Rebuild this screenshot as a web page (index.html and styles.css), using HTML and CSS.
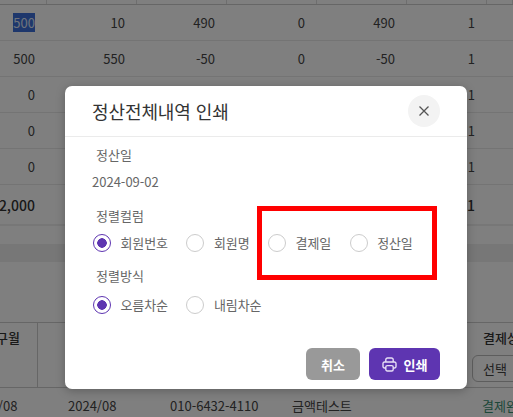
FILE: index.html
```html
<!DOCTYPE html>
<html lang="ko">
<head>
    <meta charset="utf-8">
    <title>정산내역</title>
    <link rel="stylesheet" href="styles.css">
</head>
<body>

<div class="page">
    <div class="row head-edge"><span></span><span></span><span></span><span></span><span></span><span></span><span></span></div>
    <div class="row"><span><b class="picked">500</b></span><span>10</span><span>490</span><span>0</span><span>490</span><span>1</span><span></span></div>
    <div class="row"><span>500</span><span>550</span><span>-50</span><span>0</span><span>-50</span><span>1</span><span></span></div>
    <div class="row"><span>0</span><span>0</span><span>0</span><span>0</span><span>0</span><span>1</span><span></span></div>
    <div class="row"><span>0</span><span>0</span><span>0</span><span>0</span><span>0</span><span>1</span><span></span></div>
    <div class="row"><span>0</span><span>0</span><span>0</span><span>0</span><span>0</span><span>1</span><span></span></div>
    <div class="row total"><span>2,000</span><span></span><span></span><span></span><span></span><span>11</span><span></span></div>
    <div class="band"></div>

    <div class="list-head">
        <div class="list-cell name">구월</div>
        <div class="list-cell rest"></div>
        <div class="list-cell status">
            <span>결제상태</span>
            <div class="select">선택</div>
        </div>
    </div>
    <div class="list-row">
        <span class="c1">2024/08</span>
        <span class="c2">2024/08</span>
        <span class="c3">010-6432-4110</span>
        <span class="c4">금액테스트</span>
        <span class="c5">결제완료</span>
    </div>
</div>

<div class="dim"></div>

<div class="modal">
    <div class="modal-head">
        <h2>정산전체내역 인쇄</h2>
        <button class="close">
            <svg width="10" height="10" viewBox="0 0 10 10"><path d="M.5.5l9 9M9.500.5l-9 9" stroke="#555" stroke-width="1.300" fill="none"/></svg>
        </button>
    </div>
    <div class="modal-body">
        <div class="label">정산일</div>
        <div class="date">2024-09-02</div>
        <div class="label sort">정렬컬럼</div>
        <div class="radios">
            <label class="radio on">회원번호</label>
            <label class="radio">회원명</label>
            <label class="radio">결제일</label>
            <label class="radio">정산일</label>
        </div>
        <div class="label order">정렬방식</div>
        <div class="radios second">
            <label class="radio on">오름차순</label>
            <label class="radio">내림차순</label>
        </div>
    </div>
    <div class="modal-foot">
        <button class="btn cancel">취소</button>
        <button class="btn print">
            <svg width="15" height="15" viewBox="0 0 15 15" fill="none" stroke="#e6def5" stroke-width="1.400" stroke-linejoin="round"><path d="M3.800 5V2.700a1.700 1.700 0 0 1 1.700-1.700h4a1.700 1.700 0 0 1 1.700 1.700V5"/><path d="M3.800 11H2.500A1.500 1.500 0 0 1 1 9.500V6.500A1.500 1.500 0 0 1 2.500 5h10A1.500 1.500 0 0 1 14 6.500v3a1.500 1.500 0 0 1-1.500 1.500h-1.300"/><rect x="3.800" y="8.600" width="7.400" height="5.400" rx="1.500"/></svg>
            인쇄
        </button>
    </div>
</div>

<div class="marker"></div>

</body>
</html>
```

FILE: styles.css
```css
html, body {
    margin: 0;
    height: 100%;
    overflow: hidden;
}
body {
    font-family: "Noto Sans CJK KR", "Noto Sans", sans-serif;
    font-size: 13px;
    color: #444;
    background: #fff;
}

/* table behind the dialog */
.row {
    display: grid;
    grid-template-columns: 47px 90px 90px 90px 90px 80px 26px;
    height: 36px;
    border-bottom: 1px solid #e8e8e8;
    box-sizing: border-box;
}
.row span {
    display: flex;
    align-items: center;
    justify-content: flex-end;
    padding-right: 11px;
    border-right: 1px solid transparent;
}
.head-edge {
    height: 5px;
    border-bottom-color: #ccc;
}
.head-edge span {
    border-right-color: #ddd;
}
.picked {
    font-weight: normal;
    background: #3c6fd8;
    color: #dfe6f7;
    line-height: 19px;
}
.total {
    height: 41px;
    font-weight: 500;
    color: #333;
    border-bottom: 2px solid #eee;
}
.total span {
    font-size: 14px;
}
.band {
    height: 18px;
    margin-top: 18px;
    background: #efefef;
}
.list-head {
    display: flex;
    height: 66px;
    margin-top: 60px;
    border-top: 1px solid #ccc;
    border-bottom: 1px solid #ccc;
    box-sizing: border-box;
}
.list-cell {
    box-sizing: border-box;
    font-weight: 500;
    color: #333;
}
.name {
    width: 38px;
    border-right: 1px solid #ccc;
    padding-top: 5px;
    text-align: right;
    white-space: nowrap;
    direction: rtl;
    overflow: hidden;
    padding-right: 17px;
}
.rest {
    width: 434px;
}
.status {
    flex: 1;
    padding-top: 5px;
    white-space: nowrap;
    overflow: hidden;
}
.status span {
    margin-left: 11px;
}
.select {
    width: 80px;
    height: 27px;
    margin-top: 8px;
    border: 1px solid #bbb;
    border-radius: 6px;
    box-sizing: border-box;
    padding: 3px 0 0 10px;
    font-weight: normal;
    color: #444;
}
.list-row {
    position: relative;
    height: 30px;
    white-space: nowrap;
}
.list-row span {
    position: absolute;
    top: 8px;
}
.c1 { left: -31px; }
.c2 { left: 68px; }
.c3 { left: 170px; }
.c4 { left: 292px; }
.c5 { left: 482px; color: #3a8f73; }

.dim {
    position: absolute;
    inset: 0;
    background: rgba(0, 0, 0, .5);
}

/* dialog */
.modal {
    position: absolute;
    left: 65px;
    top: 86px;
    width: 402px;
    height: 303px;
    display: flex;
    flex-direction: column;
    background: #fff;
    border-radius: 7px;
    box-shadow: 0 2px 10px rgba(0, 0, 0, .25);
}
.modal-head {
    display: flex;
    align-items: center;
    justify-content: space-between;
    height: 51px;
    padding: 0 27px 0 27px;
    border-bottom: 1px solid #ebebeb;
    box-sizing: border-box;
}
h2 {
    margin: 0;
    font-size: 18px;
    font-weight: 400;
    color: #333;
    letter-spacing: -.1px;
}
.close {
    display: flex;
    align-items: center;
    justify-content: center;
    width: 32px;
    height: 32px;
    padding: 0;
    border: 0;
    border-radius: 50%;
    background: #f3f3f3;
}
.modal-body {
    flex: 1;
    padding: 8px 27px 0;
    color: #666;
    line-height: 19px;
}
.label {
    padding-left: 4px;
}
.date {
    margin-top: 8px;
}
.sort {
    margin-top: 15px;
}
.order {
    margin-top: 14px;
}
.radios {
    display: flex;
    gap: 18.500px;
    margin-top: 8px;
    margin-left: 1px;
    height: 19px;
    letter-spacing: -.1px;
}
.second {
    margin-top: 10px;
}
.radio {
    display: flex;
    align-items: center;
    gap: 9.500px;
}
.radio::before {
    content: "";
    width: 18px;
    height: 18px;
    box-sizing: border-box;
    border: 1px solid #ccc;
    border-radius: 50%;
    background: #fff;
}
.radio.on::before {
    border-color: #5e35b1;
    background: radial-gradient(circle, #5e35b1 4.500px, #fff 5px);
}
.modal-foot {
    display: flex;
    justify-content: flex-end;
    gap: 9px;
    padding: 0 27px 9px;
}
.btn {
    display: flex;
    align-items: center;
    justify-content: center;
    gap: 7px;
    height: 32px;
    border: 0;
    border-radius: 6px;
    font-family: inherit;
    font-size: 13px;
    font-weight: bold;
    color: #fff;
}
.cancel {
    width: 54px;
    background: #999;
}
.print {
    width: 71px;
    background: #5e35b1;
}

/* red annotation drawn over the screenshot */
.marker {
    position: absolute;
    left: 257px;
    top: 206px;
    width: 180px;
    height: 74px;
    box-sizing: border-box;
    border: 5px solid #f00;
}
```
